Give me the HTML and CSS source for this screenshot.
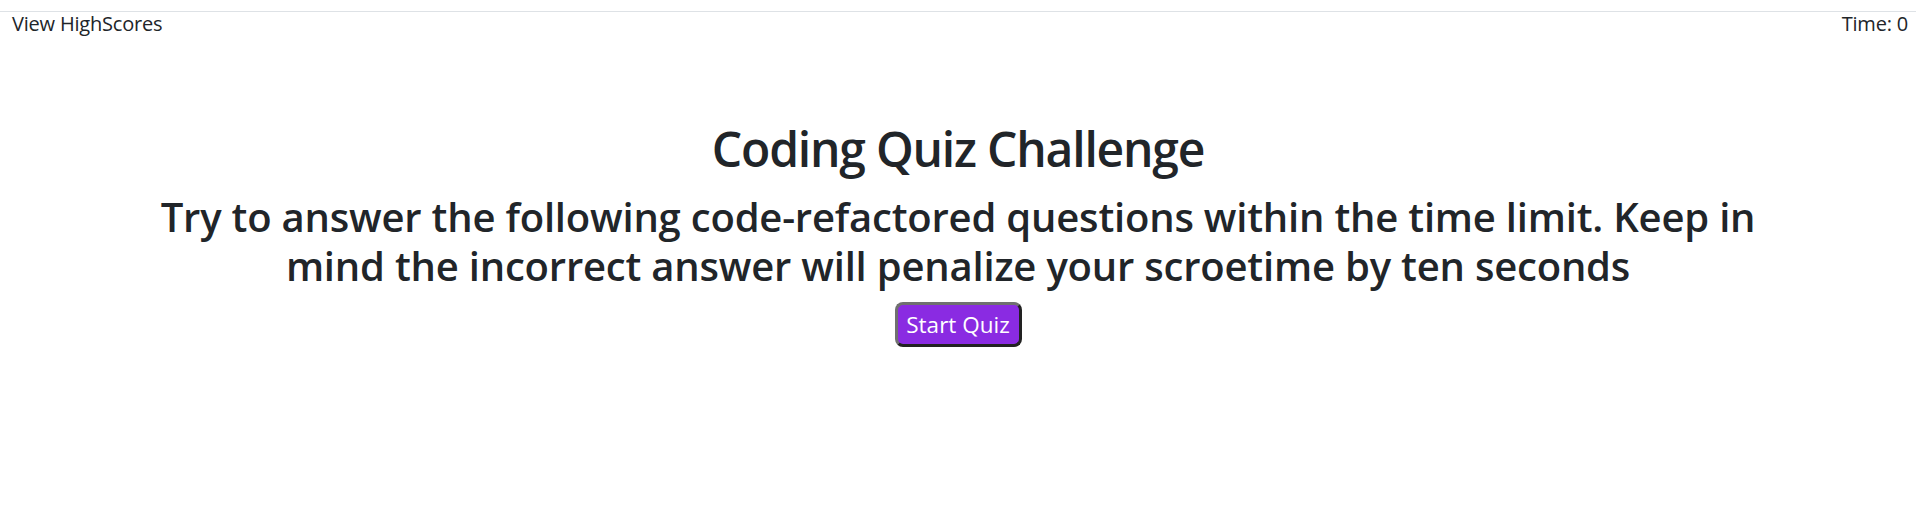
FILE: index.html
```html
<!DOCTYPE html>
<html lang="en">
<head>
<meta charset="utf-8">
<title>Coding Quiz</title>
<link rel="stylesheet" href="styles.css">
</head>
<body>
<header class="topbar">
  <a class="highscores">View HighScores</a>
  <span class="timer">Time: 0</span>
</header>
<main class="intro">
  <h1 class="title">Coding Quiz Challenge</h1>
  <h2 class="subtitle">Try to answer the following code-refactored questions within the time limit. Keep in mind the incorrect answer will penalize your scroetime by ten seconds</h2>
  <button class="start">Start Quiz</button>
</main>
</body>
</html>
```

FILE: styles.css
```css
* { box-sizing: border-box; }
html, body { margin: 0; padding: 0; background: #fff; }
body {
  font-family: "Open Sans", "Noto Sans", sans-serif;
  color: #212529;
  font-size: 16px;
  line-height: 1.5;
}
.topbar {
  margin-top: 11px;
  border-top: 1px solid #dee2e6;
  display: flex;
  justify-content: space-between;
  padding: 0 8px 0 12px;
  height: 25px;
  font-size: 20px;
  line-height: 24px;
  letter-spacing: -0.2px;
}
.highscores { color: #212529; text-decoration: none; }
.intro {
  display: flex;
  flex-direction: column;
  align-items: center;
  text-align: center;
  padding-top: 84px;
}
.title {
  margin: 0 0 14px;
  font-size: 48px;
  font-weight: 600;
  line-height: 58px;
  letter-spacing: -1.2px;
}
.subtitle {
  margin: 0 0 12px;
  max-width: 1640px;
  font-size: 40px;
  font-weight: 600;
  line-height: 49px;
  letter-spacing: -0.2px;
}
.start {
  width: 127px;
  height: 45px;
  padding: 0;
  background: #8a2be2;
  color: #fff;
  font-family: inherit;
  font-size: 22.5px;
  border: 3px solid;
  border-color: #707070 #222 #222 #707070;
  border-radius: 8px;
  cursor: pointer;
}
```
